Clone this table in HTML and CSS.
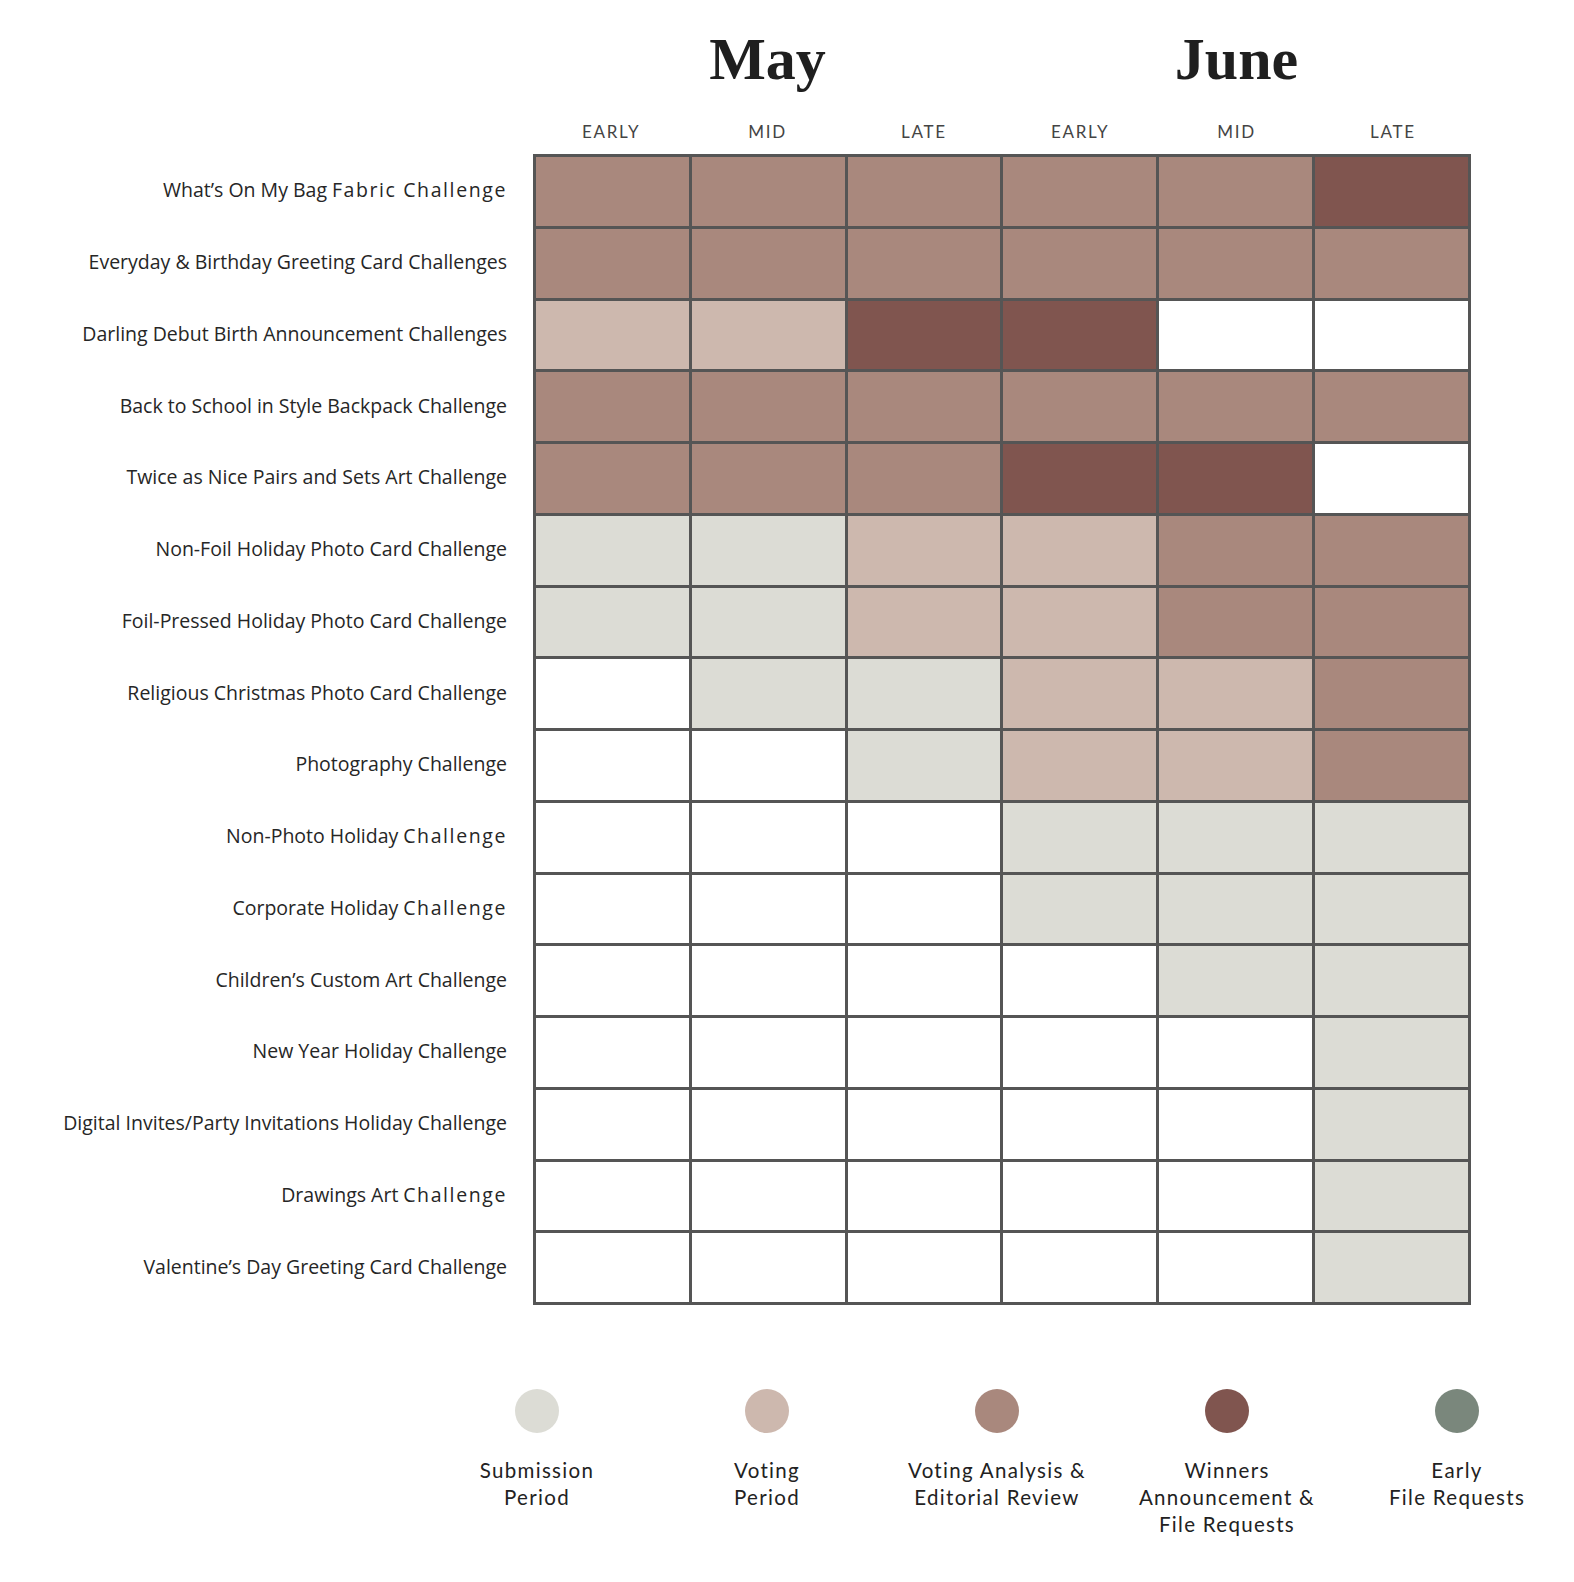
FILE: index.html
```html
<!DOCTYPE html>
<html>
<head>
<meta charset="utf-8">
<link rel="stylesheet" href="styles.css">
</head>
<body>
<div class="page">
  <div class="months">
    <div class="month">May</div>
    <div class="month">June</div>
  </div>
  <div class="periods">
    <div>EARLY</div><div>MID</div><div>LATE</div>
    <div>EARLY</div><div>MID</div><div>LATE</div>
  </div>
  <div class="chart">
    <div class="labels">
      <div>What’s On My Bag <span class="wide">Fabric Challenge</span></div>
      <div>Everyday &amp; Birthday Greeting Card Challenges</div>
      <div>Darling Debut Birth Announcement Challenges</div>
      <div>Back to School in Style Backpack Challenge</div>
      <div>Twice as Nice Pairs and Sets Art Challenge</div>
      <div>Non-Foil Holiday Photo Card Challenge</div>
      <div>Foil-Pressed Holiday Photo Card Challenge</div>
      <div>Religious Christmas Photo Card Challenge</div>
      <div>Photography Challenge</div>
      <div>Non-Photo Holiday <span class="wide">Challenge</span></div>
      <div>Corporate Holiday <span class="wide">Challenge</span></div>
      <div>Children’s Custom Art Challenge</div>
      <div>New Year Holiday Challenge</div>
      <div>Digital Invites/Party Invitations Holiday Challenge</div>
      <div>Drawings Art <span class="wide">Challenge</span></div>
      <div>Valentine’s Day Greeting Card Challenge</div>
    </div>
    <div class="grid">
      <div class="c a"></div><div class="c a"></div><div class="c a"></div><div class="c a"></div><div class="c a"></div><div class="c w"></div>
      <div class="c a"></div><div class="c a"></div><div class="c a"></div><div class="c a"></div><div class="c a"></div><div class="c a"></div>
      <div class="c v"></div><div class="c v"></div><div class="c w"></div><div class="c w"></div><div class="c"></div><div class="c"></div>
      <div class="c a"></div><div class="c a"></div><div class="c a"></div><div class="c a"></div><div class="c a"></div><div class="c a"></div>
      <div class="c a"></div><div class="c a"></div><div class="c a"></div><div class="c w"></div><div class="c w"></div><div class="c"></div>
      <div class="c s"></div><div class="c s"></div><div class="c v"></div><div class="c v"></div><div class="c a"></div><div class="c a"></div>
      <div class="c s"></div><div class="c s"></div><div class="c v"></div><div class="c v"></div><div class="c a"></div><div class="c a"></div>
      <div class="c"></div><div class="c s"></div><div class="c s"></div><div class="c v"></div><div class="c v"></div><div class="c a"></div>
      <div class="c"></div><div class="c"></div><div class="c s"></div><div class="c v"></div><div class="c v"></div><div class="c a"></div>
      <div class="c"></div><div class="c"></div><div class="c"></div><div class="c s"></div><div class="c s"></div><div class="c s"></div>
      <div class="c"></div><div class="c"></div><div class="c"></div><div class="c s"></div><div class="c s"></div><div class="c s"></div>
      <div class="c"></div><div class="c"></div><div class="c"></div><div class="c"></div><div class="c s"></div><div class="c s"></div>
      <div class="c"></div><div class="c"></div><div class="c"></div><div class="c"></div><div class="c"></div><div class="c s"></div>
      <div class="c"></div><div class="c"></div><div class="c"></div><div class="c"></div><div class="c"></div><div class="c s"></div>
      <div class="c"></div><div class="c"></div><div class="c"></div><div class="c"></div><div class="c"></div><div class="c s"></div>
      <div class="c"></div><div class="c"></div><div class="c"></div><div class="c"></div><div class="c"></div><div class="c s"></div>
    </div>
  </div>
  <div class="legend">
    <div class="item"><span class="dot s"></span><div class="txt">Submission<br>Period</div></div>
    <div class="item"><span class="dot v"></span><div class="txt">Voting<br>Period</div></div>
    <div class="item"><span class="dot a"></span><div class="txt">Voting Analysis &amp;<br>Editorial Review</div></div>
    <div class="item"><span class="dot w"></span><div class="txt">Winners<br>Announcement &amp;<br>File Requests</div></div>
    <div class="item"><span class="dot e"></span><div class="txt">Early<br>File Requests</div></div>
  </div>
</div>
</body>
</html>
```

FILE: styles.css
```css
html, body {
  margin: 0;
  padding: 0;
  background: #ffffff;
}

.page {
  width: 1574px;
  font-family: "Lato", "Liberation Sans", sans-serif;
  color: #222222;
}

.months {
  display: flex;
  margin-left: 533px;
  width: 938px;
  padding-top: 24px;
}

.month {
  flex: 1;
  text-align: center;
  font-family: "Liberation Serif", "Times New Roman", serif;
  font-weight: bold;
  font-size: 60px;
  line-height: 70px;
  color: #1f1f1f;
}

.periods {
  display: grid;
  grid-template-columns: repeat(6, 1fr);
  margin-left: 533px;
  width: 938px;
  margin-top: 28px;
  font-size: 17px;
  line-height: 20px;
  letter-spacing: 1.7px;
  color: #444444;
  text-align: center;
}

.chart {
  display: flex;
  margin-top: 12px;
  height: 1151px;
}

.labels {
  width: 507px;
  margin-right: 26px;
  display: grid;
  grid-template-rows: repeat(16, 1fr);
  row-gap: 3px;
  padding: 3px 0;
  box-sizing: border-box;
  font-family: "Open Sans", "Liberation Sans", sans-serif;
  font-size: 19.5px;
  letter-spacing: 0;
  text-align: right;
  color: #262626;
}

.labels div {
  display: flex;
  align-items: center;
  justify-content: flex-end;
  white-space: nowrap;
  padding-bottom: 3px;
}

.labels .wide {
  letter-spacing: 1.6px;
  margin-left: 0.25em;
}

.grid {
  width: 938px;
  height: 1151px;
  box-sizing: border-box;
  background: #555555;
  padding: 3px;
  display: grid;
  grid-template-columns: repeat(6, 1fr);
  grid-template-rows: repeat(16, 1fr);
  gap: 3px;
}

.c { background: #ffffff; }
.s { background: #dcdcd5; }
.v { background: #cdb8ae; }
.a { background: #a9887d; }
.w { background: #80554f; }
.e { background: #7a877c; }

.legend {
  display: flex;
  margin-left: 422px;
  margin-top: 84px;
}

.item {
  width: 230px;
  display: flex;
  flex-direction: column;
  align-items: center;
}

.dot {
  width: 44px;
  height: 44px;
  border-radius: 50%;
}

.txt {
  margin-top: 24px;
  text-align: center;
  font-size: 20.5px;
  line-height: 27px;
  letter-spacing: 1.3px;
  color: #222222;
}
```
